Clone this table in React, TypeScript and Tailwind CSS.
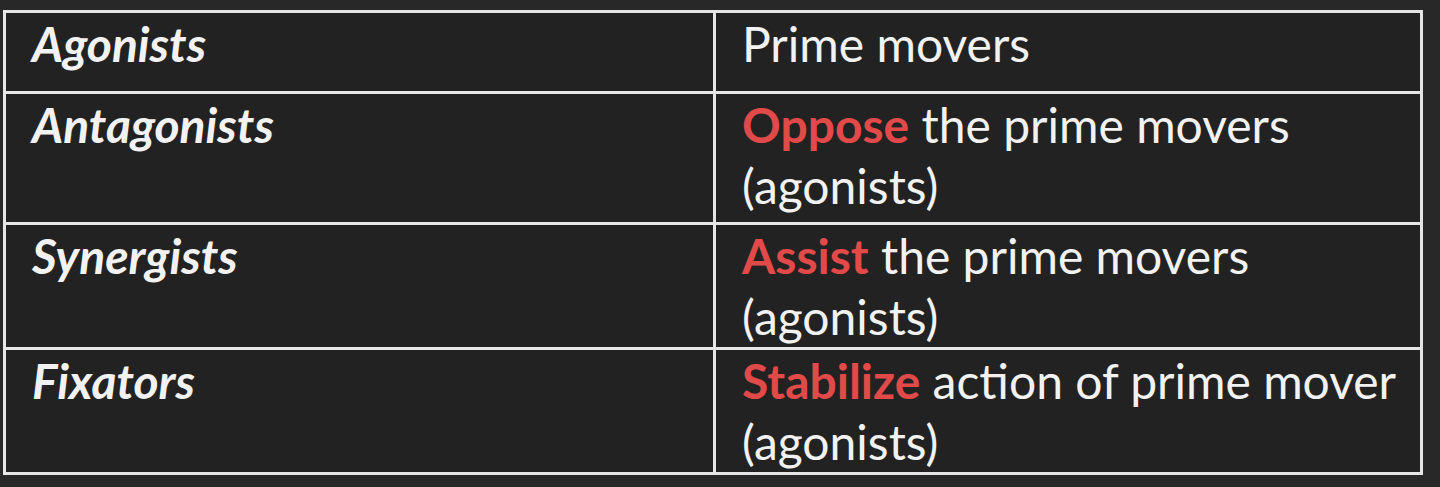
const rows = [
  { term: "Agonists", verb: "", rest: "Prime movers", tail: "", h: "h-[81px]" },
  { term: "Antagonists", verb: "Oppose", rest: " the prime movers", tail: "(agonists)", h: "h-[131px]" },
  { term: "Synergists", verb: "Assist", rest: " the prime movers", tail: "(agonists)", h: "h-[125px]" },
  { term: "Fixators", verb: "Stabilize", rest: " action of prime mover", tail: "(agonists)", h: "h-[125px]" },
];

export default function App() {
  return (
    <div className="w-[1440px] h-[487px] bg-[#282828] pl-[3px] pt-[10px] font-['Lato',sans-serif]">
      <table className="w-[1420px] border-collapse border-[3px] border-[#e6e6e6] bg-[#222222] text-[48px] leading-[61px] text-[#f2f2f2]">
        <tbody>
          {rows.map((r) => (
            <tr key={r.term} className={r.h}>
              <td className="w-[710px] border-[3px] border-[#e6e6e6] pl-[26px] py-0 align-top font-bold italic">
                {r.term}
              </td>
              <td className="border-[3px] border-[#e6e6e6] pl-[26px] pr-[4px] py-0 align-top whitespace-nowrap">
                {r.verb && <span className="font-bold text-[#e24a4a]">{r.verb}</span>}
                {r.rest}
                {r.tail && <br />}
                {r.tail}
              </td>
            </tr>
          ))}
        </tbody>
      </table>
    </div>
  );
}
